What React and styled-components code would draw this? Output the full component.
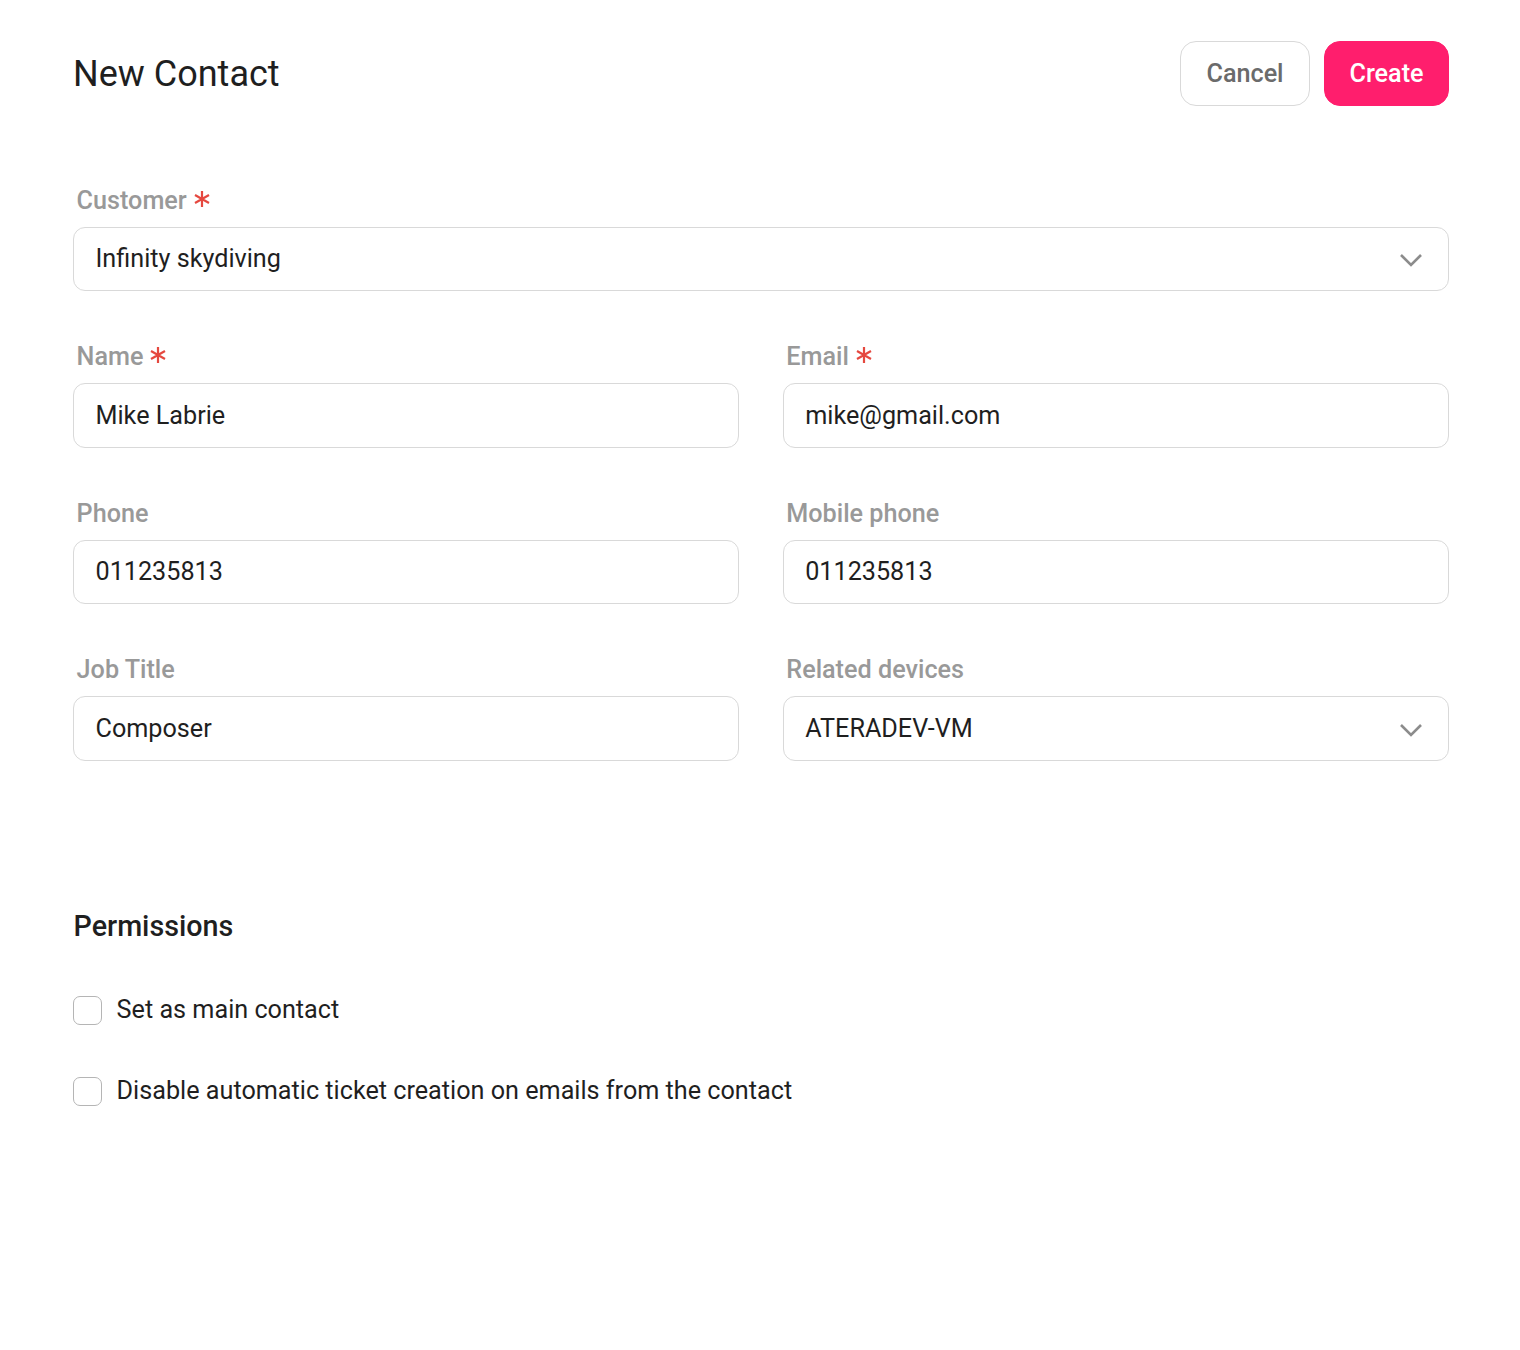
import React from 'react'
import styled, { createGlobalStyle } from 'styled-components'

const GlobalStyle = createGlobalStyle`
  html, body {
    margin: 0;
    background: #fff;
    font-family: Roboto, "Liberation Sans", sans-serif;
  }
`

const Page = styled.div`
  box-sizing: border-box;
  width: 1520px;
  height: 1350px;
  padding: 41px 71px 0 73px;
`

const Header = styled.div`
  display: flex;
  align-items: center;
  justify-content: space-between;
  height: 65px;
  margin-bottom: 81px;
`

const Title = styled.h1`
  margin: 0;
  font-size: 36px;
  font-weight: 400;
  color: #1f1f1f;
`

const Actions = styled.div`
  display: flex;
  gap: 14px;
`

const Button = styled.button`
  box-sizing: border-box;
  height: 65px;
  width: ${(props) => (props.$primary ? '125px' : '130px')};
  padding: 0 0 1px;
  border-radius: 16px;
  border: 1px solid ${(props) => (props.$primary ? '#ff1e6d' : '#d9d9d9')};
  background: ${(props) => (props.$primary ? '#ff1e6d' : '#fff')};
  color: ${(props) => (props.$primary ? '#fff' : '#6b6b6b')};
  font-family: inherit;
  font-size: 25.2px;
  font-weight: 500;
`

const Grid = styled.div`
  display: grid;
  grid-template-columns: 665.7px 666.3px;
  column-gap: 44px;
`

const FieldWrap = styled.div`
  grid-column: ${(props) => (props.$wide ? '1 / 3' : 'auto')};
  height: 156.4px;
`

const Label = styled.div`
  display: flex;
  align-items: center;
  gap: 7px;
  height: 40px;
  padding: 0 0 13px 3.6px;
  box-sizing: border-box;
  font-size: 25.2px;
  font-weight: 500;
  color: #999;
`

const Star = styled.svg`
  width: 16px;
  height: 16px;
  margin-top: -4px;
  stroke: #e5483f;
  stroke-width: 2.2;
  fill: none;
`

const InputBox = styled.div`
  box-sizing: border-box;
  display: flex;
  align-items: center;
  justify-content: space-between;
  height: 64.4px;
  padding: 0 25px 0.5px 21.5px;
  border: 1px solid #d9d9d9;
  border-radius: 12px;
  font-size: 25.2px;
  color: #1f1f1f;
`

const Chevron = styled.svg`
  width: 24px;
  height: 14px;
  margin-top: 3px;
  stroke: #8c8c8c;
  stroke-width: 2.6;
  fill: none;
`

const SectionTitle = styled.h2`
  margin: 97px 0 53px 0.5px;
  font-size: 28.7px;
  line-height: 33px;
  font-weight: 500;
  color: #1f1f1f;
`

const CheckRow = styled.label`
  display: flex;
  align-items: center;
  gap: 14.6px;
  height: 29px;
  margin-bottom: 52px;
  font-size: 25.2px;
  color: #1f1f1f;
`

const CheckBox = styled.span`
  box-sizing: border-box;
  width: 29px;
  height: 29px;
  border: 1px solid #b5b5b5;
  border-radius: 7px;
`

const CheckText = styled.span`
  margin-top: -2px;
`

const RequiredStar = () => (
  <Star viewBox="0 0 16 16">
    <path d="M8 0v16M1 4l14 8M15 4L1 12" />
  </Star>
)

const Field = ({ label, value, required, select, wide }) => (
  <FieldWrap $wide={wide}>
    <Label>
      {label}
      {required && <RequiredStar />}
    </Label>
    <InputBox>
      {value}
      {select && (
        <Chevron viewBox="0 0 24 14">
          <path d="M2 2l10 10L22 2" />
        </Chevron>
      )}
    </InputBox>
  </FieldWrap>
)

export default function App() {
  return (
    <>
      <GlobalStyle />
      <Page>
        <Header>
          <Title>New Contact</Title>
          <Actions>
            <Button>Cancel</Button>
            <Button $primary>Create</Button>
          </Actions>
        </Header>
        <Grid>
          <Field wide required select label="Customer" value="Infinity skydiving" />
          <Field required label="Name" value="Mike Labrie" />
          <Field required label="Email" value="mike@gmail.com" />
          <Field label="Phone" value="011235813" />
          <Field label="Mobile phone" value="011235813" />
          <Field label="Job Title" value="Composer" />
          <Field select label="Related devices" value="ATERADEV-VM" />
        </Grid>
        <SectionTitle>Permissions</SectionTitle>
        <CheckRow>
          <CheckBox />
          <CheckText>Set as main contact</CheckText>
        </CheckRow>
        <CheckRow>
          <CheckBox />
          <CheckText>Disable automatic ticket creation on emails from the contact</CheckText>
        </CheckRow>
      </Page>
    </>
  )
}
